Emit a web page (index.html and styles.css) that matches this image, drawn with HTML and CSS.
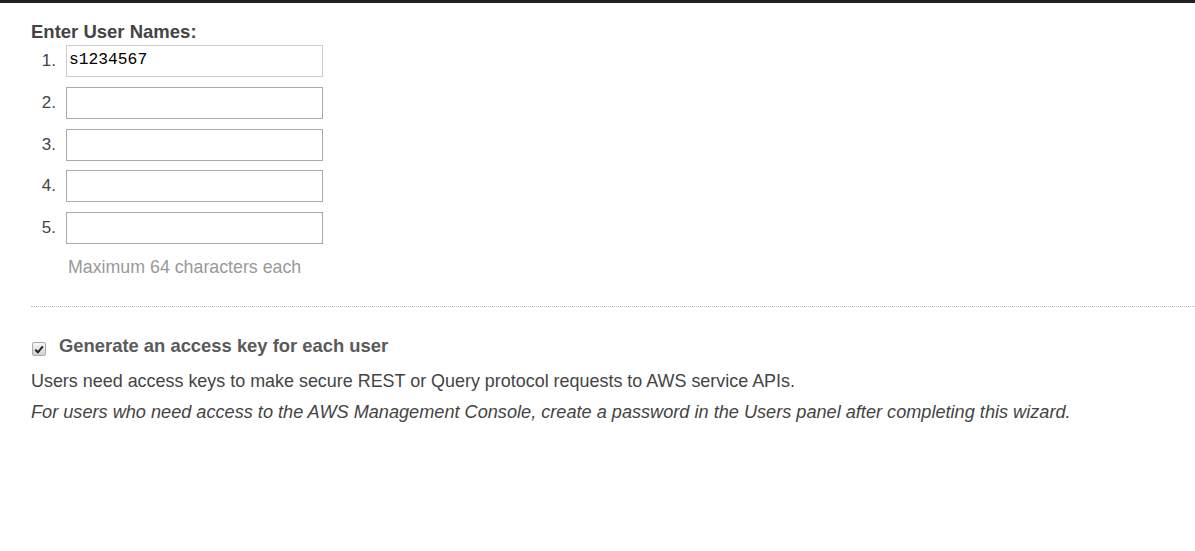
FILE: index.html
```html
<!DOCTYPE html>
<html>
<head>
<meta charset="utf-8">
<link rel="stylesheet" href="styles.css">
</head>
<body>
<div class="topbar"></div>
<div class="page">
  <h2 class="heading">Enter User Names:</h2>
  <div class="names">
    <div class="row"><span class="num">1.</span><input class="field first" type="text" value="s1234567"></div>
    <div class="row"><span class="num">2.</span><input class="field" type="text"></div>
    <div class="row"><span class="num">3.</span><input class="field" type="text"></div>
    <div class="row"><span class="num">4.</span><input class="field" type="text"></div>
    <div class="row"><span class="num">5.</span><input class="field" type="text"></div>
  </div>
  <div class="hint">Maximum 64 characters each</div>
  <div class="divider"></div>
  <label class="check-row">
    <span class="checkbox"><svg width="10" height="9" viewBox="0 0 10 9"><path d="M1.3 4.8 L3.9 7.3 L8.8 1.4" fill="none" stroke="#222" stroke-width="2"/></svg></span>
    <span class="check-label">Generate an access key for each user</span>
  </label>
  <p class="desc">Users need access keys to make secure REST or Query protocol requests to AWS service APIs.</p>
  <p class="desc note">For users who need access to the AWS Management Console, create a password in the Users panel after completing this wizard.</p>
</div>
</body>
</html>
```
FILE: styles.css
```css
html, body {
  margin: 0;
  padding: 0;
  background: #fff;
}
body {
  font-family: "Liberation Sans", Arial, sans-serif;
  color: #444;
  font-size: 18px;
}
.topbar {
  height: 3px;
  background: #222;
}
.page {
  padding-left: 31px;
  padding-top: 18px;
}
.heading {
  margin: 0;
  font-size: 18.5px;
  font-weight: bold;
  line-height: 22px;
  color: #444;
}
.names {
  display: flex;
  flex-direction: column;
  gap: 9.75px;
  margin-top: 2px;
}
.row {
  display: flex;
  align-items: center;
}
.num {
  width: 25px;
  text-align: right;
  margin-right: 10px;
  font-size: 17px;
  color: #444;
}
.field {
  box-sizing: border-box;
  width: 257px;
  height: 32px;
  margin: 0;
  border: 1px solid #aaa;
  padding: 0 2px 3px;
  font-family: "Liberation Mono", monospace;
  font-size: 16.3px;
  color: #000;
  background: #fff;
  outline: none;
}
.field.first {
  border-color: #ccc;
}
.hint {
  margin: 12px 0 0 37px;
  color: #999;
  font-size: 17.8px;
  line-height: 22px;
}
.divider {
  margin-top: 28px;
  border-top: 1px dotted #bbb;
}
.check-row {
  display: flex;
  align-items: center;
  margin-top: 28px;
}
.checkbox {
  box-sizing: border-box;
  width: 14px;
  height: 14px;
  margin: 6px 13px 0 1px;
  border: 1px solid #aaa;
  border-radius: 2px;
  background: linear-gradient(#f6f6f6, #d2d2d2);
  display: flex;
  align-items: center;
  justify-content: center;
}
.check-label {
  font-weight: bold;
  font-size: 18.4px;
  color: #5a5a5a;
  line-height: 22px;
}
.desc {
  margin: 14px 0 0;
  font-size: 17.93px;
  line-height: 20px;
  color: #444;
}
.desc.note {
  margin-top: 11px;
  font-style: italic;
  font-size: 18.15px;
}
```
